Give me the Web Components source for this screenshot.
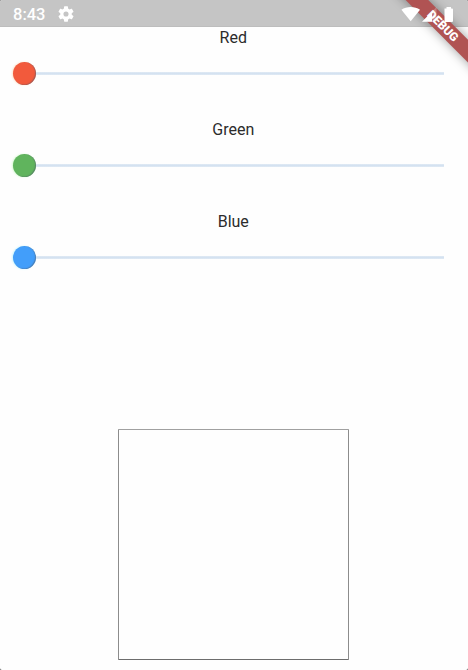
<!DOCTYPE html>
<html lang="en">
<head>
<meta charset="utf-8">
<title>Color mixer</title>
<style>
html, body { margin: 0; height: 100%; background: #555; overflow: hidden; }
</style>
</head>
<body>
<color-app></color-app>
<script>
class StatusBar extends HTMLElement {
  constructor() {
    super();
    this.attachShadow({ mode: 'open' }).innerHTML = `
      <style>
        :host { display: flex; align-items: center; box-sizing: border-box; height: 27px; padding: 2px 14px 0 13px;
          background: #c5c5c5; color: #fff; border-bottom: 1px solid #bdbdbd; }
        span { font: 500 16.5px/20px Roboto, sans-serif; width: 44.5px; padding-top: 2px; }
        svg { display: block; }
        .left { flex: 1; }
        .icons { position: relative; z-index: 3; }
      </style>
      <span>8:43</span>
      <svg class="left" width="16" height="16" viewBox="2 2 20 20" preserveAspectRatio="xMinYMid meet"><path fill="#fff" d="M19.14 12.94c.04-.3.06-.61.06-.94s-.02-.64-.07-.94l2.03-1.58a.49.49 0 0 0 .12-.61l-1.92-3.32a.49.49 0 0 0-.59-.22l-2.39.96a7 7 0 0 0-1.62-.94l-.36-2.54a.48.48 0 0 0-.48-.41h-3.84a.47.47 0 0 0-.47.41l-.36 2.54c-.59.24-1.13.57-1.62.94l-2.39-.96a.48.48 0 0 0-.59.22L2.74 8.870a.48.48 0 0 0 .12.61l2.03 1.58a6 6 0 0 0 0 1.88l-2.03 1.58a.49.49 0 0 0-.12.61l1.92 3.32c.12.22.37.29.59.22l2.39-.96c.5.38 1.03.7 1.62.94l.36 2.54c.05.24.24.41.48.41h3.84c.24 0 .44-.17.47-.41l.36-2.54a7 7 0 0 0 1.62-.94l2.39.96c.22.08.47 0 .59-.22l1.92-3.32a.47.47 0 0 0-.12-.61zM12 15.2a3.2 3.2 0 1 1 0-6.4 3.2 3.2 0 0 1 0 6.400z"/></svg>
      <svg class="icons" width="53" height="16" viewBox="401 5 53 16"><g fill="#fff">
        <path d="M410.700 20.200L401.400 8.700C406.500 5.200 414.900 5.200 420 8.700Z"/>
        <path d="M422 20.700L436.500 6V20.700Z" fill-opacity=".25"/>
        <path d="M422 20.700L432 10.800V20.700Z"/>
        <path d="M444.500 7.500h2V6h4.500v1.500h1q1 0 1 1V20q0 1-1 1h-6.500q-1 0-1-1Z"/>
      </g></svg>`;
  }
}
class DebugBanner extends HTMLElement {
  constructor() {
    super();
    this.attachShadow({ mode: 'open' }).innerHTML = `
      <style>
        :host { position: absolute; top: 0; right: 0; width: 110px; height: 110px; overflow: hidden; z-index: 2; }
        div { position: absolute; left: 5px; top: 18px; width: 160px; height: 15.6px; transform: rotate(45deg);
          background: #b05353; box-shadow: 0 0 11px rgba(0,0,0,.38); color: #fff; text-align: center;
          font: 900 12px/16px Roboto, sans-serif; }
      </style>
      <div><slot></slot></div>`;
  }
}
class ColorSlider extends HTMLElement {
  constructor() {
    super();
    this.attachShadow({ mode: 'open' }).innerHTML = `
      <style>
        :host { display: block; height: 92px; }
        .label { font: 400 16px/20px Roboto, sans-serif; color: #2c2c2c; text-align: center; padding: 1px 1.500px 0 0; }
        .row { display: flex; align-items: center; height: 23px; margin: 14px 24.500px 0 13px; }
        .thumb { width: 23px; height: 23px; border-radius: 50%; box-sizing: border-box; background: var(--thumb);
          box-shadow: inset -1px -.5px 1px rgba(80,90,110,.5), -1px 0 2px var(--glow); }
        .track { flex: 1; height: 3px; background: linear-gradient(#e1eaf4, #d4e2f1, #e1eaf4); }
      </style>
      <div class="label"><slot></slot></div>
      <div class="row"><div class="thumb"></div><div class="track"></div></div>`;
  }
}
class ColorPreview extends HTMLElement {
  constructor() {
    super();
    this.attachShadow({ mode: 'open' }).innerHTML = `
      <style>
        :host { display: block; box-sizing: border-box; width: 231px; height: 231px; border: 1px solid #8c8c8c;
          border-top-color: #a0a0a0; border-bottom-color: #6d6d6d; border-radius: 1px; background: #fefefe; }
      </style>`;
  }
}
class ColorApp extends HTMLElement {
  constructor() {
    super();
    this.attachShadow({ mode: 'open' }).innerHTML = `
      <style>
        :host { display: flex; flex-direction: column; position: relative; width: 468px; height: 670px;
          box-sizing: border-box; padding-bottom: 10px; overflow: hidden; background: #fefefe; border-radius: 2px; }
        main { flex: 1; display: flex; flex-direction: column; }
        color-preview { margin: auto auto 0 118px; }
      </style>
      <status-bar></status-bar>
      <debug-banner>DEBUG</debug-banner>
      <main>
        <color-slider style="--thumb:#f25a3c;--glow:#ffe3cc">Red</color-slider>
        <color-slider style="--thumb:#60b45d;--glow:#d5fbd0">Green</color-slider>
        <color-slider style="--thumb:#429efa;--glow:#c8f6ff">Blue</color-slider>
        <color-preview></color-preview>
      </main>`;
  }
}
customElements.define('status-bar', StatusBar);
customElements.define('debug-banner', DebugBanner);
customElements.define('color-slider', ColorSlider);
customElements.define('color-preview', ColorPreview);
customElements.define('color-app', ColorApp);
</script>
</body>
</html>
